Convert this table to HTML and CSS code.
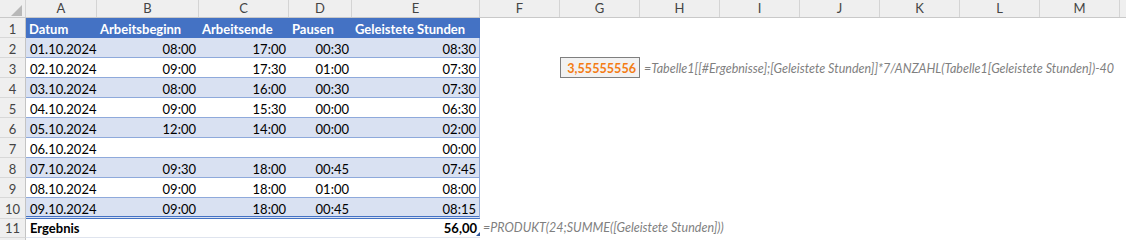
FILE: index.html
```html
<!DOCTYPE html>
<html lang="de">
<head>
<meta charset="utf-8">
<title>Tabelle1</title>
<link rel="stylesheet" href="styles.css">
</head>
<body>
<div class="sheet">
  <div class="row colhdr">
    <div class="corner"><svg width="26" height="18" viewBox="0 0 26 18"><polygon points="22,5 22,16 11,16" fill="#b8b8b8"/></svg></div>
    <div class="ch w-a">A</div><div class="ch w-b">B</div><div class="ch w-c">C</div><div class="ch w-d">D</div><div class="ch w-e">E</div>
    <div class="ch w-x">F</div><div class="ch w-x">G</div><div class="ch w-x">H</div><div class="ch w-x">I</div><div class="ch w-x">J</div><div class="ch w-x">K</div><div class="ch w-x">L</div><div class="ch w-x">M</div><div class="ch w-n"></div>
  </div>

  <div class="row thead">
    <div class="rh">1</div>
    <div class="cell w-a th">Datum</div><div class="cell w-b th">Arbeitsbeginn</div><div class="cell w-c th">Arbeitsende</div><div class="cell w-d th">Pausen</div><div class="cell w-e th">Geleistete Stunden</div>
    <div class="empty"></div>
  </div>

  <div class="row band">
    <div class="rh">2</div>
    <div class="cell w-a">01.10.2024</div><div class="cell w-b num">08:00</div><div class="cell w-c num">17:00</div><div class="cell w-d num">00:30</div><div class="cell w-e num last">08:30</div>
    <div class="empty"></div>
  </div>

  <div class="row">
    <div class="rh">3</div>
    <div class="cell w-a">02.10.2024</div><div class="cell w-b num">09:00</div><div class="cell w-c num">17:30</div><div class="cell w-d num">01:00</div><div class="cell w-e num last">07:30</div>
    <div class="free w-x"></div>
    <div class="calc w-x">3,55555556</div>
    <div class="formula">=Tabelle1[[#Ergebnisse];[Geleistete Stunden]]*7/ANZAHL(Tabelle1[Geleistete Stunden])-40</div>
  </div>

  <div class="row band">
    <div class="rh">4</div>
    <div class="cell w-a">03.10.2024</div><div class="cell w-b num">08:00</div><div class="cell w-c num">16:00</div><div class="cell w-d num">00:30</div><div class="cell w-e num last">07:30</div>
    <div class="empty"></div>
  </div>

  <div class="row">
    <div class="rh">5</div>
    <div class="cell w-a">04.10.2024</div><div class="cell w-b num">09:00</div><div class="cell w-c num">15:30</div><div class="cell w-d num">00:00</div><div class="cell w-e num last">06:30</div>
    <div class="empty"></div>
  </div>

  <div class="row band">
    <div class="rh">6</div>
    <div class="cell w-a">05.10.2024</div><div class="cell w-b num">12:00</div><div class="cell w-c num">14:00</div><div class="cell w-d num">00:00</div><div class="cell w-e num last">02:00</div>
    <div class="empty"></div>
  </div>

  <div class="row">
    <div class="rh">7</div>
    <div class="cell w-a">06.10.2024</div><div class="cell w-b num"></div><div class="cell w-c num"></div><div class="cell w-d num"></div><div class="cell w-e num last">00:00</div>
    <div class="empty"></div>
  </div>

  <div class="row band">
    <div class="rh">8</div>
    <div class="cell w-a">07.10.2024</div><div class="cell w-b num">09:30</div><div class="cell w-c num">18:00</div><div class="cell w-d num">00:45</div><div class="cell w-e num last">07:45</div>
    <div class="empty"></div>
  </div>

  <div class="row">
    <div class="rh">9</div>
    <div class="cell w-a">08.10.2024</div><div class="cell w-b num">09:00</div><div class="cell w-c num">18:00</div><div class="cell w-d num">01:00</div><div class="cell w-e num last">08:00</div>
    <div class="empty"></div>
  </div>

  <div class="row band lastrow">
    <div class="rh">10</div>
    <div class="cell w-a">09.10.2024</div><div class="cell w-b num">09:00</div><div class="cell w-c num">18:00</div><div class="cell w-d num">00:45</div><div class="cell w-e num last">08:15</div>
    <div class="empty"></div>
  </div>

  <div class="row total">
    <div class="rh">11</div>
    <div class="cell w-a tb">Ergebnis</div><div class="cell w-b"></div><div class="cell w-c"></div><div class="cell w-d"></div><div class="cell w-e num tb endcell">56,00<span class="handle"></span></div>
    <div class="formula f2">=PRODUKT(24;SUMME([Geleistete Stunden]))</div>
  </div>

  <div class="row tail">
    <div class="rh"></div>
  </div>
</div>
</body>
</html>
```

FILE: styles.css
```css
html, body {
  margin: 0;
  padding: 0;
  background: #ffffff;
}
body {
  font-family: Lato, "Liberation Sans", sans-serif;
  font-size: 13px;
  color: #000;
  width: 1126px;
  height: 240px;
  overflow: hidden;
}
.sheet {
  display: flex;
  flex-direction: column;
  width: 1126px;
}
.row {
  display: flex;
  height: 20px;
  flex: none;
}

/* column headers */
.colhdr {
  height: 18px;
  background: #efefef;
  border-bottom: 1px solid #c9c9c9;
  box-sizing: border-box;
}
.corner {
  width: 26px;
  height: 17px;
  flex: none;
  border-right: 1px solid #d4d4d4;
  box-sizing: border-box;
  overflow: hidden;
}
.corner svg { display: block; }
.ch {
  flex: none;
  height: 17px;
  line-height: 17px;
  text-align: center;
  color: #444;
  border-right: 1px solid #d4d4d4;
  box-sizing: border-box;
}
.w-a { width: 71px; }
.w-b { width: 102px; }
.w-c { width: 90px; }
.w-d { width: 63px; }
.w-e { width: 128px; }
.w-x { width: 80px; }
.w-n { width: 6px; border-right: none; }

/* row headers */
.rh {
  width: 26px;
  flex: none;
  background: #efefef;
  border-right: 1px solid #c4c4c4;
  border-bottom: 1px solid #d8d8d8;
  box-sizing: border-box;
  text-align: center;
  color: #444;
  padding-top: 3px;
  line-height: 16px;
}

/* cells */
.cell {
  flex: none;
  box-sizing: border-box;
  padding: 3px 3px 0 4px;
  line-height: 16px;
  white-space: nowrap;
  border-bottom: 1px solid #8ea9db;
  overflow: visible;
  position: relative;
}
.num { text-align: right; }
.last { border-right: 1px solid #8ea9db; }
.band .cell { background: #d9e1f2; }

.thead .cell {
  background: #4472c4;
  color: #fff;
  font-weight: 700;
  border-bottom: none;
  padding-left: 3px;
  overflow: visible;
}

.lastrow { height: 21px; }
.lastrow .cell { border-bottom: 3px double #4472c4; }

.total { height: 19px; }
.total .cell {
  padding-top: 1px;
  border-bottom: 1px solid #dfe4ee;
}
.total .rh { padding-top: 1px; }
.tb { font-weight: 700; }
.endcell { border-right: none; }
.handle {
  position: absolute;
  right: 0;
  bottom: 1px;
  width: 0;
  height: 0;
  border-left: 4px solid transparent;
  border-bottom: 4px solid #2f5597;
}

.tail { height: 2px; }

.empty { flex: none; }
.free { flex: none; }

.calc {
  flex: none;
  box-sizing: border-box;
  height: 21px;
  margin-top: -1px;
  background: #f2f2f2;
  border: 1px solid #7f7f7f;
  color: #f47c14;
  font-weight: 700;
  font-size: 12.6px;
  text-align: right;
  padding: 3px 3px 0 0;
  line-height: 16px;
}

.formula {
  flex: none;
  white-space: nowrap;
  font-style: italic;
  color: #7f7f7f;
  padding: 3px 0 0 4px;
  line-height: 16px;
  font-size: 12.5px;
}
.f2 { padding-top: 1px; padding-left: 3px; }
```
